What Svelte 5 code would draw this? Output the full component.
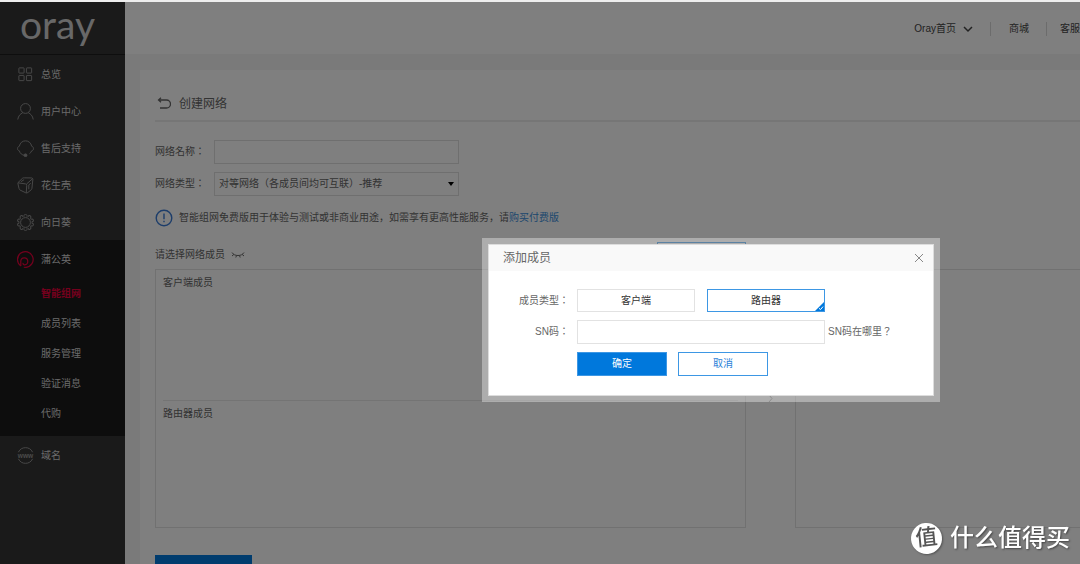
<script>
  const menu = [
    { icon: 'grid', label: '总览' },
    { icon: 'user', label: '用户中心' },
    { icon: 'headset', label: '售后支持' },
    { icon: 'cube', label: '花生壳' },
    { icon: 'sun', label: '向日葵' },
    {
      icon: 'pgy',
      label: '蒲公英',
      children: ['智能组网', '成员列表', '服务管理', '验证消息', '代购']
    },
    { icon: 'www', label: '域名' }
  ];

  const memberTypes = ['客户端', '路由器'];
  const petals = [0, 36, 72, 108, 144, 180, 216, 252, 288, 324];

  let activeChild = $state('智能组网');
  let memberType = $state('路由器');
  let networkName = $state('');
  let sn = $state('');
  let open = $state(true);
</script>

{#snippet menuIcon(name)}
  <svg class="menu-icon" class:red={name === 'pgy'} viewBox="0 0 18 18" aria-hidden="true">
    {#if name === 'grid'}
      <rect x="2" y="2" width="5.500" height="5.500" rx="0.5" />
      <rect x="10" y="2" width="5.500" height="5.500" rx="0.5" />
      <rect x="2" y="10" width="5.500" height="5.500" rx="0.5" />
      <rect x="10" y="10" width="5.500" height="5.500" rx="0.5" />
    {:else if name === 'user'}
      <circle cx="9" cy="5.800" r="5.200" />
      <path d="M0.800 17.500C1.400 13.500 3.600 11.500 6 10.300M12 10.300C14.400 11.500 16.600 13.500 17.200 17.500" />
    {:else if name === 'headset'}
      <path d="M2.500 6.500C3.200 3 5.800 0.900 9 0.900S14.800 3 15.500 6.500M2.500 11.500C3.200 14.200 5.200 15.800 8 16.300M15.500 11.500C15 12.900 14.200 13.800 13.200 14.500" />
      <path d="M2.500 6.700C0.900 7 0.600 8 0.600 9.100S0.900 11.200 2.500 11.500M15.500 6.700C17.100 7 17.400 8 17.400 9.100S17.100 11.200 15.500 11.500" />
      <circle cx="9" cy="16.200" r="1.500" class="solid" />
    {:else if name === 'cube'}
      <path d="M1 6L6 1.200Q6.800 0.800 8 0.900L15.500 1Q16.800 1.200 16.800 2.500L15.800 12Q15.700 13 15 13.600L11.500 16.400Q10.500 17.200 9.200 16.700L3.200 13.800Q2.400 13.400 2.200 12.300L1 7.200Z" />
      <path d="M1.200 6.200L9 7.300Q10.400 7.500 10.300 9L9.800 16.800M10 7.500L16.500 1.800M4.200 5L7.500 2.800M12.500 13V8.500L14.500 6.500" />
    {:else if name === 'sun'}
      <circle cx="9" cy="9" r="5.200" />
      {#each petals as angle}
        <path d="M7.600 2.700A1.600 1.600 0 1 1 10.400 2.700" transform="rotate({angle} 9 9)" />
      {/each}
    {:else if name === 'pgy'}
      <path d="M4 15.800A8.300 8.300 0 1 1 9.500 17.300L7.200 17.200" />
      <path d="M4 15.800V11A3.700 3.700 0 1 1 8 14.600Q6.200 14.600 6.400 12.600" />
    {:else}
      <path d="M1.500 5.500C3 2.200 5.800 0.700 9 0.700S15 2.200 16.500 5.500M1.500 12.500C3 15.800 5.800 17.300 9 17.300S15 15.800 16.500 12.500" />
      <text x="9" y="11.500" text-anchor="middle">www</text>
    {/if}
  </svg>
{/snippet}

<div class="page">
  <aside class="sidebar">
    <a class="logo" href="#home">oray</a>
    <nav>
      {#each menu as item}
        <div class="group" class:expanded={item.children}>
          <a class="menu-item" href="#menu">
            {@render menuIcon(item.icon)}
            {item.label}
          </a>
          {#each item.children ?? [] as child}
            <a
              class="sub-item"
              class:active={child === activeChild}
              href="#sub"
              onclick={() => (activeChild = child)}>{child}</a>
          {/each}
        </div>
      {/each}
    </nav>
  </aside>

  <div class="main">
    <header class="topbar">
      <a href="#oray">
        Oray首页
        <svg class="chevron" viewBox="0 0 10 10" aria-hidden="true"><path d="M1 3L5 7L9 3" /></svg>
      </a>
      <a href="#mall">商城</a>
      <a href="#service">客服</a>
    </header>

    <section class="panel">
      <h1>
        <svg class="back" viewBox="0 0 14 14" aria-hidden="true">
          <path d="M1.500 3H9.500A3.700 3.700 0 0 1 9.500 11H3M4 0.800L1.500 3L4 5.200" />
        </svg>
        创建网络
      </h1>

      <div class="field">
        <label for="name">网络名称：</label>
        <input id="name" type="text" bind:value={networkName} />
      </div>
      <div class="field">
        <label for="type">网络类型：</label>
        <div class="select">
          <select id="type">
            <option>对等网络（各成员间均可互联）-推荐</option>
          </select>
        </div>
      </div>

      <p class="notice">
        <svg viewBox="0 0 18 18" aria-hidden="true">
          <circle cx="9" cy="9" r="7.800" />
          <path d="M9 4.500V10.300M9 11.800V13.300" />
        </svg>
        <span>智能组网免费版用于体验与测试或非商业用途，如需享有更高性能服务，请<a href="#buy">购买付费版</a></span>
      </p>

      <div class="pick">
        <span>请选择网络成员</span>
        <svg class="lash" viewBox="0 0 14 8" aria-hidden="true">
          <path d="M1 1.500C3 5.500 11 5.500 13 1.500M2.800 3.500L1 5M5.500 4.600L4.800 6.500M8.500 4.600L9.200 6.500M11.200 3.500L13 5" />
        </svg>
        <button class="add" type="button" aria-label="添加成员" onclick={() => (open = true)}></button>
      </div>

      <div class="lists">
        <div class="list">
          <div class="half">客户端成员</div>
          <div class="half">路由器成员</div>
        </div>
        <svg class="arrow" viewBox="0 0 9 9" aria-hidden="true"><path d="M3 1L6 4.500L3 8" /></svg>
        <div class="list"></div>
      </div>

      <button class="save" type="button" aria-label="保存"></button>
    </section>
  </div>
</div>

{#if open}
  <div class="mask"></div>
  <div class="dialog" role="dialog" aria-labelledby="dialog-title">
    <div class="dialog-box">
      <div class="dialog-head">
        <h2 id="dialog-title">添加成员</h2>
        <button class="close" type="button" aria-label="关闭" onclick={() => (open = false)}>
          <svg viewBox="0 0 10 10" aria-hidden="true"><path d="M1 1L9 9M9 1L1 9" /></svg>
        </button>
      </div>
      <form class="dialog-body" onsubmit={(e) => e.preventDefault()}>
        <div class="row">
          <span class="row-label">成员类型：</span>
          {#each memberTypes as type}
            <button
              class="type"
              class:selected={type === memberType}
              type="button"
              onclick={() => (memberType = type)}>
              {type}
              {#if type === memberType}
                <svg class="corner" viewBox="0 0 9 9" aria-hidden="true">
                  <path class="fill" d="M9 0V9H0Z" />
                  <path class="tick" d="M4 6.300L5.500 7.600L8 4.600" />
                </svg>
              {/if}
            </button>
          {/each}
        </div>
        <div class="row">
          <label class="row-label" for="sn">SN码：</label>
          <input id="sn" type="text" bind:value={sn} />
          <a class="help" href="#sn">SN码在哪里？</a>
        </div>
        <div class="row">
          <span class="row-label"></span>
          <button class="action primary" type="submit">确定</button>
          <button class="action" type="button" onclick={() => (open = false)}>取消</button>
        </div>
      </form>
    </div>
  </div>
{/if}

<div class="watermark">
  <span class="badge">值</span>
  <span>什么值得买</span>
</div>

<style>
  :global(body) {
    overflow: hidden;
    background: #f5f5f5;
    font-family: "Liberation Sans", "Noto Sans CJK SC", sans-serif;
    font-size: 10px;
    line-height: 16px;
    color: #666;
  }

  * {
    box-sizing: border-box;
  }

  a {
    color: inherit;
    text-decoration: none;
  }

  button,
  input,
  select {
    font: inherit;
    color: inherit;
    border-radius: 0;
  }

  svg {
    fill: none;
    stroke: currentColor;
    flex: none;
  }

  .page {
    display: flex;
    height: 100vh;
    border-top: 2px solid #eee;
    overflow: hidden;
  }

  /* sidebar */
  .sidebar {
    flex: none;
    width: 125px;
    background: #343434;
    color: #d4d4d4;
  }

  .logo {
    display: block;
    height: 53px;
    padding-left: 20px;
    border-bottom: 1px solid #1c1c1c;
    font-family: Lato, sans-serif;
    font-size: 39px;
    line-height: 44px;
    color: #d0d0d0;
  }

  .menu-item {
    display: flex;
    align-items: center;
    gap: 7px;
    height: 37px;
    padding: 2px 0 0 17px;
  }

  .menu-icon {
    width: 17px;
    height: 17px;
    color: #959595;
  }

  .menu-icon.red {
    color: #e8003a;
    stroke-width: 1.3;
  }

  .menu-icon .solid {
    fill: currentColor;
  }

  .menu-icon text {
    font-size: 7px;
    font-weight: bold;
    fill: currentColor;
    stroke: none;
  }

  .expanded {
    padding-bottom: 9px;
    background: #1a1a1a;
  }

  .sub-item {
    display: block;
    height: 30px;
    padding: 2px 0 0 41px;
    line-height: 30px;
  }

  .sub-item.active {
    color: #e8003a;
    font-weight: bold;
  }

  /* top bar */
  .main {
    flex: 1;
    min-width: 0;
  }

  .topbar {
    display: flex;
    justify-content: flex-end;
    align-items: center;
    height: 52px;
    padding-top: 2px;
    background: #fff;
    color: #444;
  }

  .topbar a {
    display: flex;
    align-items: center;
    gap: 7px;
    height: 14px;
    padding: 0 17px 0 18px;
    border-right: 1px solid #d8d8d8;
  }

  .topbar a:last-child {
    padding: 0 0 0 13px;
    border-right: none;
  }

  .chevron {
    width: 10px;
    height: 10px;
    stroke-width: 1.5;
  }

  /* content */
  .panel {
    margin: 16px 0 0 15px;
    padding: 18px 0 0 15px;
    background: #fff;
  }

  h1 {
    display: flex;
    align-items: center;
    gap: 8px;
    height: 34px;
    margin: 0 0 18px;
    padding-left: 2px;
    border-bottom: 2px solid #ededed;
    font-size: 12px;
    font-weight: normal;
  }

  .back {
    width: 14px;
    height: 14px;
    stroke-width: 1.3;
  }

  .field {
    display: flex;
    align-items: center;
    height: 24px;
    margin-bottom: 8px;
  }

  .field label {
    width: 59px;
  }

  /* full-width punctuation is centred in these */
  .field label,
  .row-label,
  .help {
    font-family: "Liberation Sans", "Noto Sans CJK TC", sans-serif;
  }

  .field input,
  .select {
    width: 245px;
    height: 24px;
    border: 1px solid #dedede;
    background: #fff;
  }

  .select {
    position: relative;
  }

  .select select {
    width: 100%;
    height: 100%;
    padding: 0 4px;
    border: none;
    background: none;
    appearance: none;
  }

  .select::after {
    content: '';
    position: absolute;
    top: 9px;
    right: 4px;
    border: 3px solid transparent;
    border-top: 4px solid #000;
    pointer-events: none;
  }

  .notice {
    display: flex;
    align-items: center;
    gap: 6px;
    height: 18px;
    margin: 13px 0;
  }

  .notice svg {
    width: 18px;
    height: 18px;
    color: #3a7bd5;
    stroke-width: 1.4;
  }

  .notice a {
    color: #3d8fdc;
  }

  .pick {
    display: flex;
    align-items: center;
    gap: 6px;
    width: 591px;
    height: 29px;
  }

  .lash {
    width: 14px;
    height: 8px;
  }

  .add {
    width: 89px;
    height: 26px;
    margin-left: auto;
    border: 1px solid #0078dc;
    background: #fff;
  }

  .lists {
    display: flex;
    align-items: center;
    gap: 20px;
  }

  .list {
    flex: none;
    width: 591px;
    height: 259px;
    padding: 0 7px;
    border: 1px solid #e2e2e2;
  }

  .half {
    height: 130px;
    padding-top: 5px;
  }

  .half + .half {
    border-top: 1px solid #e8e8e8;
  }

  .arrow {
    width: 9px;
    height: 9px;
    color: #999;
  }

  .save {
    width: 97px;
    height: 28px;
    margin-top: 27px;
    border: 1px solid #0078dc;
    background: #0078dc;
  }

  /* dialog */
  .mask {
    position: fixed;
    inset: 2px 0 0;
    background: rgba(0, 0, 0, 0.5);
  }

  .dialog {
    position: fixed;
    top: 238px;
    left: 482px;
    width: 458px;
    padding: 6px;
    background: rgba(255, 255, 255, 0.36);
  }

  .dialog-box {
    border: 1px solid #ddd;
    background: #fff;
    color: #666;
  }

  .dialog-head {
    display: flex;
    align-items: center;
    justify-content: space-between;
    height: 26px;
    padding: 0 9px 0 14px;
    background: #f9f9f9;
  }

  h2 {
    margin: 0;
    font-size: 12px;
    font-weight: normal;
  }

  .close {
    display: flex;
    padding: 0;
    border: none;
    background: none;
    color: #888;
  }

  .close svg {
    width: 10px;
    height: 10px;
  }

  .dialog-body {
    display: flex;
    flex-direction: column;
    gap: 8px;
    padding: 18px 0 19px 26px;
  }

  .row {
    display: flex;
    align-items: center;
  }

  .row-label {
    width: 54px;
    margin-right: 8px;
    text-align: right;
  }

  .row input {
    width: 248px;
    height: 24px;
    border: 1px solid #e2e2e2;
  }

  .type {
    position: relative;
    width: 118px;
    height: 23px;
    margin-right: 12px;
    padding: 0;
    border: 1px solid #e2e2e2;
    background: #fff;
    color: #333;
  }

  .type.selected {
    border-color: #3d97e4;
  }

  .corner {
    position: absolute;
    right: 0;
    bottom: 0;
    width: 9px;
    height: 9px;
  }

  .corner .fill {
    fill: #0078dc;
    stroke: none;
  }

  .corner .tick {
    stroke: #fff;
  }

  .help {
    margin-left: 3px;
  }

  .action {
    width: 90px;
    height: 24px;
    margin-right: 11px;
    padding: 0;
    border: 1px solid #3d97e4;
    background: #fff;
    color: #2b7fd8;
  }

  .action.primary {
    background: #0078dc;
    color: #fff;
  }

  /* watermark */
  .watermark {
    position: fixed;
    right: 10px;
    bottom: 10px;
    display: flex;
    align-items: center;
    gap: 8px;
    font-size: 24px;
    font-weight: 500;
    line-height: 32px;
    color: #fff;
    text-shadow: 1px 1px 2px #444;
    pointer-events: none;
  }

  .badge {
    width: 31px;
    height: 31px;
    border-radius: 50%;
    background: #fff;
    box-shadow: 1px 1px 2px #555;
    font-size: 22px;
    line-height: 30px;
    text-align: center;
    text-shadow: none;
    color: #555;
    transform: rotate(-6deg);
  }
</style>
